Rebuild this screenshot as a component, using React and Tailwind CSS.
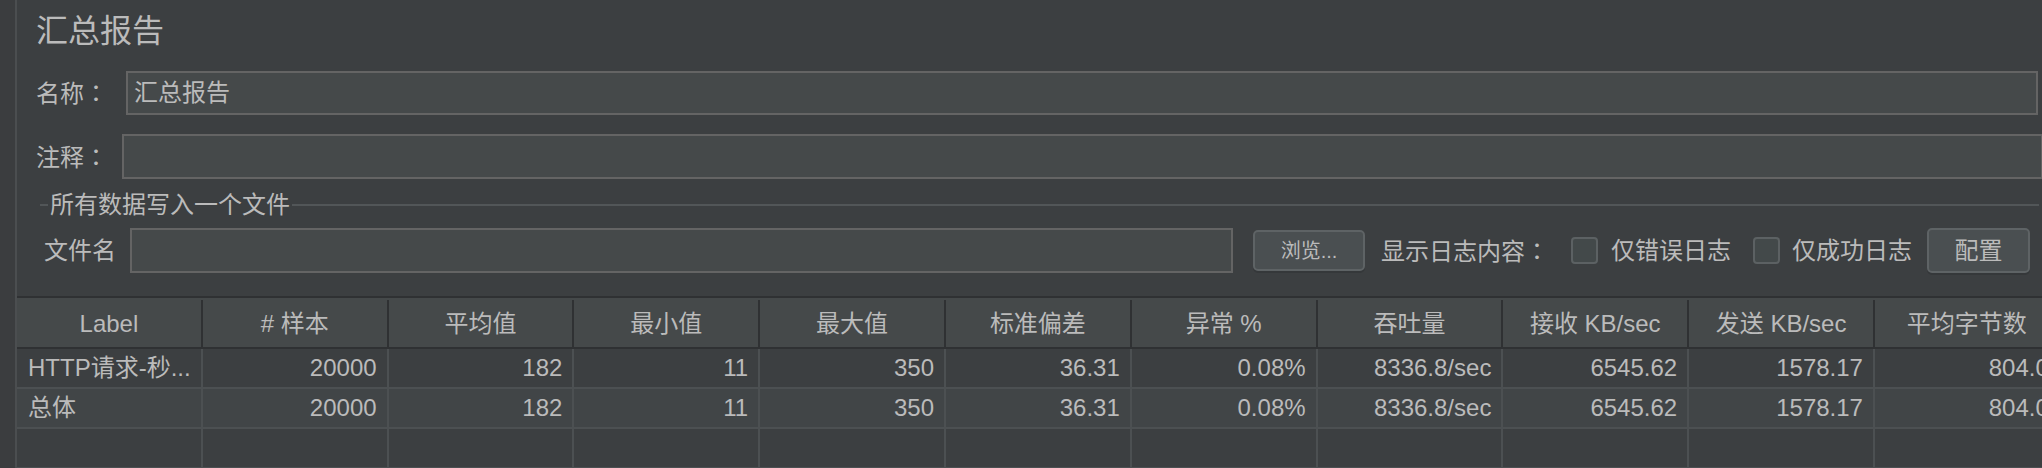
const COLUMNS = [
  "Label",
  "# 样本",
  "平均值",
  "最小值",
  "最大值",
  "标准偏差",
  "异常 %",
  "吞吐量",
  "接收 KB/sec",
  "发送 KB/sec",
  "平均字节数",
];

const ROWS = [
  ["HTTP请求-秒...", "20000", "182", "11", "350", "36.31", "0.08%", "8336.8/sec", "6545.62", "1578.17", "804.0"],
  ["总体", "20000", "182", "11", "350", "36.31", "0.08%", "8336.8/sec", "6545.62", "1578.17", "804.0"],
];

const FONT = "font-['Liberation_Sans','Noto_Sans_CJK_SC',sans-serif]";

// full-width colon drawn centred in its box, as the Mac font does
function Colon() {
  return <span className="font-['Noto_Sans_CJK_TC',sans-serif]">：</span>;
}

function Checkbox() {
  return <span className="block h-[27px] w-[27px] shrink-0 rounded-[4px] border-2 border-[#5c6163] bg-[#43494a]" />;
}

function Button({ children, className = "" }) {
  return (
    <button
      type="button"
      className={`flex shrink-0 items-center justify-center rounded-[5px] border-2 border-[#5e6365] bg-[#4a4f51] text-[#bbbbbb] shadow-[0_2px_0_#35383a] ${className}`}
    >
      {children}
    </button>
  );
}

function TableRow({ cells, bg }) {
  return (
    <div className={`flex h-[40px] shrink-0 border-b-2 border-[#4c5052] ${bg}`}>
      {cells.map((cell, i) => (
        <div
          key={i}
          className={`flex w-[185.8px] shrink-0 items-center overflow-hidden whitespace-nowrap border-r-2 border-[#4c5052] ${
            i === 0 ? "justify-start pl-[11px]" : "justify-end pr-[10px]"
          }`}
        >
          {cell}
        </div>
      ))}
    </div>
  );
}

export default function App() {
  return (
    <div className={`flex h-[468px] w-[2042px] overflow-hidden bg-[#3c3f41] text-[24px] leading-none text-[#bbbbbb] ${FONT}`}>
      <div className="w-[15px] shrink-0 bg-[#3b3d3f]" />
      <div className="w-[2px] shrink-0 bg-[#4b4e50]" />

      <div className="flex min-w-0 flex-1 flex-col">
        <div className="flex flex-col pl-[19px]">
          <div className="flex h-[54px] items-center pt-[8px] text-[32px]">汇总报告</div>

          <div className="mt-[17px] flex h-[44px] items-center">
            <span className="w-[90px] shrink-0">
              名称<Colon />
            </span>
            <div className="mr-[4px] flex h-[44px] flex-1 items-center border-2 border-[#646464] bg-[#45494a] pl-[6px]">
              汇总报告
            </div>
          </div>

          <div className="mt-[19px] flex h-[45px] items-center">
            <span className="w-[86px] shrink-0">
              注释<Colon />
            </span>
            <div className="-mr-[1px] h-[45px] flex-1 border-2 border-[#646464] bg-[#45494a]" />
          </div>

          <div className="mt-[11px] flex h-[30px] items-center pl-[4px] pr-[3px]">
            <span className="h-[2px] w-[8px] bg-[#525658]" />
            <span className="px-[2px]">所有数据写入一个文件</span>
            <span className="h-[2px] flex-1 bg-[#525658]" />
          </div>

          <div className="mt-[8px] flex h-[45px] items-center">
            <span className="ml-[8px] w-[86px] shrink-0">文件名</span>
            <div className="h-[45px] w-[1103px] shrink-0 border-2 border-[#646464] bg-[#45494a]" />
            <Button className="ml-[20px] h-[41px] w-[112px] text-[20px]">浏览...</Button>
            <span className="ml-[16px] w-[190px] shrink-0 whitespace-nowrap">
              显示日志内容<Colon />
            </span>
            <Checkbox />
            <span className="ml-[13px] w-[142px] shrink-0 whitespace-nowrap">仅错误日志</span>
            <Checkbox />
            <span className="ml-[12px] w-[135px] shrink-0 whitespace-nowrap">仅成功日志</span>
            <Button className="h-[45px] w-[103px]">配置</Button>
          </div>
        </div>

        <div className="mt-[23px] flex flex-col border-t-2 border-[#2f3133]">
          <div className="flex h-[51px] shrink-0 border-b-2 border-[#2f3133] bg-[#45494a] pt-[2px]">
            {COLUMNS.map((col) => (
              <div
                key={col}
                className="flex w-[185.8px] shrink-0 items-center justify-center whitespace-nowrap border-r-2 border-[#2f3133]"
              >
                {col}
              </div>
            ))}
          </div>
          <TableRow cells={ROWS[0]} bg="bg-[#3c3f41]" />
          <TableRow cells={ROWS[1]} bg="bg-[#414547]" />
          <TableRow cells={Array(11).fill("")} bg="bg-[#3c3f41]" />
        </div>
      </div>
    </div>
  );
}
